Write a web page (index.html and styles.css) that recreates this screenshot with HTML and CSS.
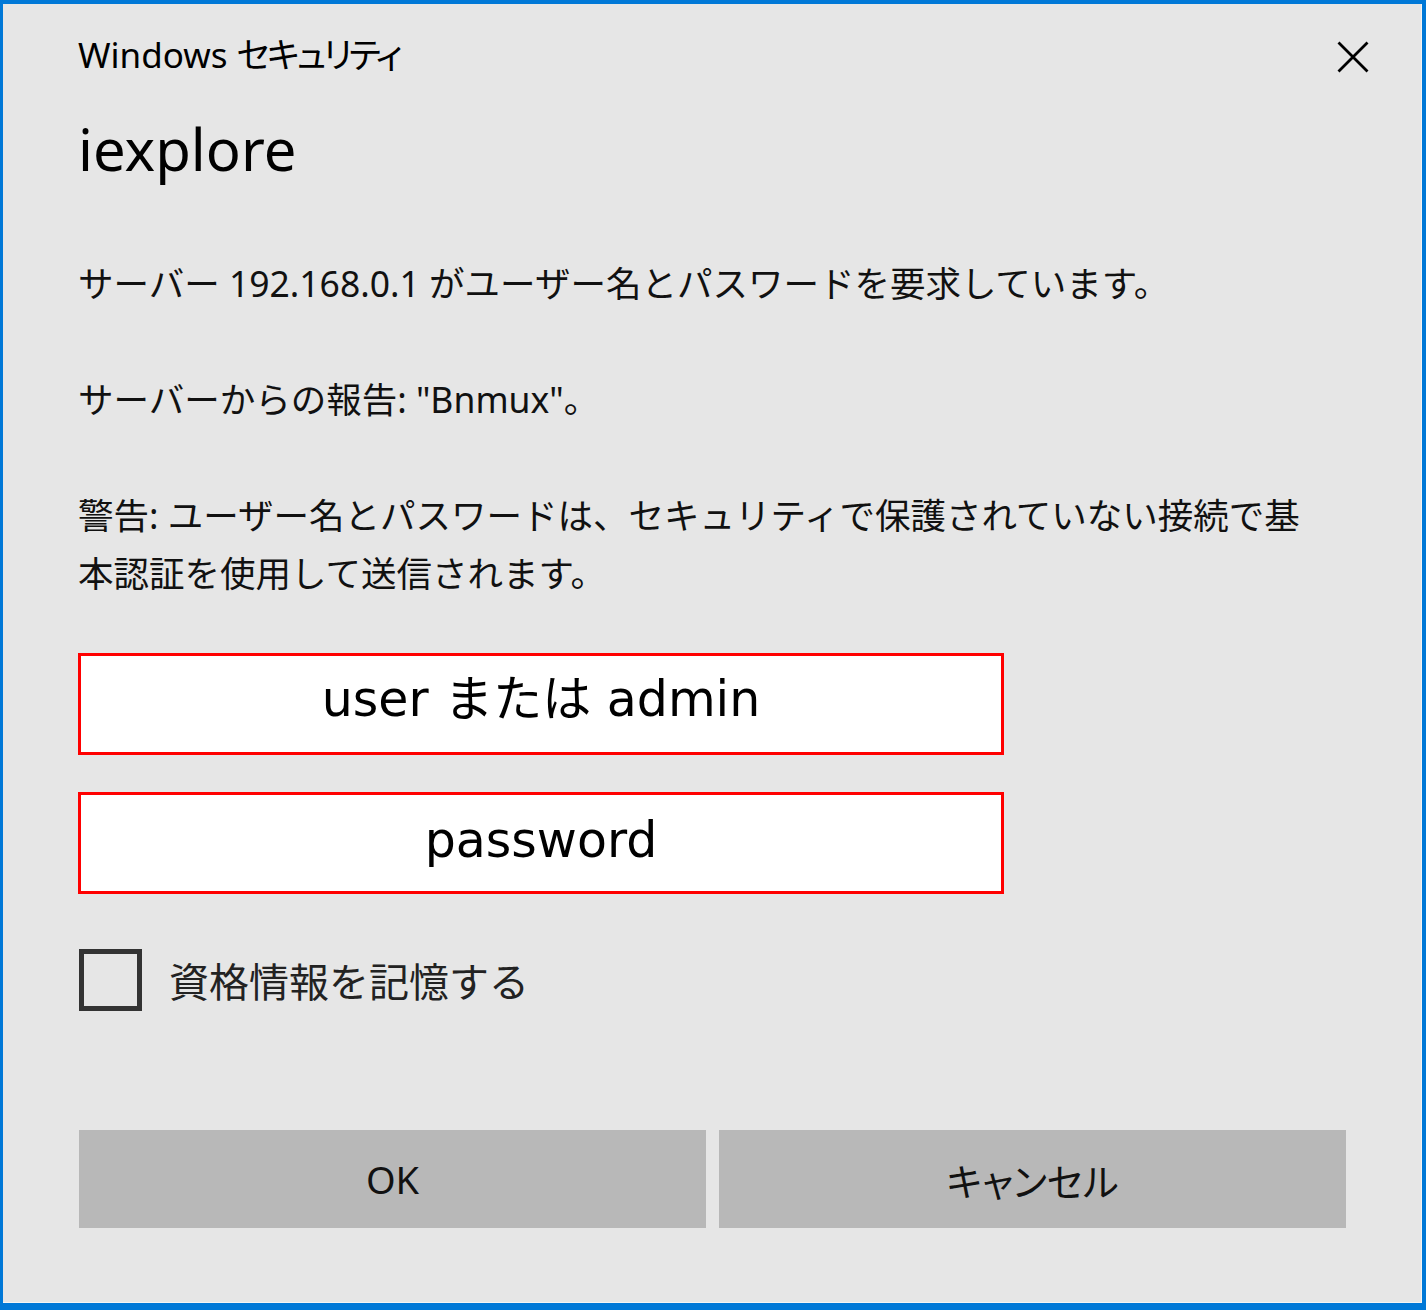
FILE: index.html
```html
<!DOCTYPE html>
<html lang="ja">
<head>
  <meta charset="UTF-8">
  <title>Windows セキュリティ</title>
  <link rel="stylesheet" href="styles.css">
</head>
<body>

  <div class="dialog">
    <div class="titlebar">
      <span class="caption">Windows <span class="caption-ja">セキュリティ</span></span>
      <button class="close" type="button" aria-label="閉じる">
        <svg width="32" height="32" viewBox="0 0 32 32">
          <path d="M1.5 1.5 L30.5 30.5 M30.5 1.5 L1.5 30.5" stroke="#000" stroke-width="2.8" fill="none"/>
        </svg>
      </button>
    </div>

    <div class="content">
      <h1 class="app">iexplore</h1>

      <p class="msg">サーバー 192.168.0.1 がユーザー名とパスワードを要求しています。</p>
      <p class="msg">サーバーからの報告: "Bnmux"。</p>
      <p class="msg">警告: ユーザー名とパスワードは、セキュリティで保護されていない接続で基<br>本認証を使用して送信されます。</p>

      <div class="field field-user">user または admin</div>
      <div class="field field-pass">password</div>

      <label class="remember">
        <span class="box"></span>
        <span class="remember-text">資格情報を記憶する</span>
      </label>

      <div class="buttons">
        <button class="btn" type="button">OK</button>
        <button class="btn" type="button">キャンセル</button>
      </div>
    </div>
  </div>

</body>
</html>
```

FILE: styles.css
```css
body {
  margin: 0;
  background-color: #e6e6e6;
  font-family: "Noto Sans", "Noto Sans CJK JP", sans-serif;
  color: #000;
}
.dialog {
  width: 1426px;
  height: 1310px;
  box-sizing: border-box;
  background-color: #e6e6e6;
  border-style: solid;
  border-color: #0078d7;
  border-width: 4px 4px 7px 3px;
  box-shadow: inset -1px -1px 0 #f4f4f4;
}
.titlebar {
  display: flex;
  justify-content: space-between;
  align-items: center;
  height: 60px;
  margin-top: 21px;
  padding: 0 53px 0 75px;
}
.caption {
  font-size: 35px;
  line-height: 60px;
  font-feature-settings: "palt";
}
.caption-ja {
  letter-spacing: -3px;
}
.close {
  width: 32px;
  height: 32px;
  margin-top: 4px;
  padding: 0;
  border: none;
  background: none;
}
.close svg {
  display: block;
}
.content {
  padding: 0 76px 0 75px;
}
.app {
  font-size: 58px;
  font-weight: normal;
  line-height: 60px;
  margin: 34px 0 0;
}
.msg {
  font-size: 35.5px;
  line-height: 58px;
  margin: 0;
  color: #111;
}
.app + .msg {
  margin-top: 75px;
}
.msg + .msg {
  margin-top: 58px;
}
.field {
  display: flex;
  align-items: center;
  justify-content: center;
  box-sizing: border-box;
  width: 926px;
  height: 102px;
  padding-bottom: 10px;
  background-color: #fff;
  border: 3px solid #ff0000;
  font-family: "DejaVu Sans", "Noto Sans CJK JP", sans-serif;
  font-size: 49px;
  line-height: 49px;
}
.field-user {
  margin-top: 51px;
}
.field-pass {
  margin-top: 37px;
  padding-bottom: 6px;
}
.remember {
  display: flex;
  align-items: center;
  margin-top: 55px;
}
.box {
  width: 63px;
  height: 62px;
  box-sizing: border-box;
  border: 5px solid #333;
  margin-left: 1px;
}
.remember-text {
  margin-left: 27px;
  font-size: 40px;
  color: #222;
}
.buttons {
  display: flex;
  gap: 13px;
  margin-top: 119px;
  margin-left: 1px;
}
.btn {
  flex: 1;
  height: 98px;
  border: none;
  background-color: #b8b8b8;
  font-family: "Noto Sans", "Noto Sans CJK JP", sans-serif;
  font-size: 38px;
  font-feature-settings: "palt";
  color: #111;
}
```
